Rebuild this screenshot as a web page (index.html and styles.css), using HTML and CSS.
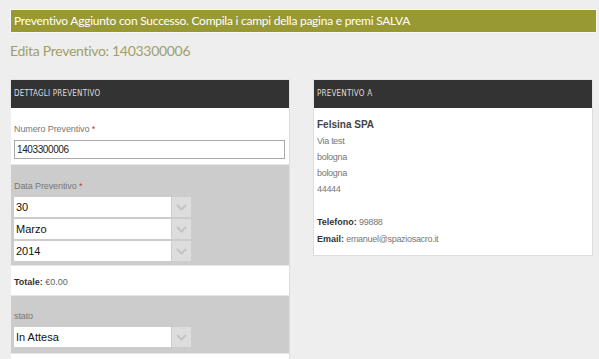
FILE: index.html
```html
<!DOCTYPE html>
<html lang="it">
<head>
  <meta charset="UTF-8" />
  <meta name="viewport" content="width=device-width, initial-scale=1.0"/>
  <title>Edita Preventivo</title>
  <link rel="stylesheet" href="styles.css">
</head>
<body>

  <div class="notice">Preventivo Aggiunto con Successo. Compila i campi della pagina e premi SALVA</div>
  <h1>Edita Preventivo: 1403300006</h1>

  <div class="columns">
    <div class="panel left">
      <div class="panel-head">Dettagli Preventivo</div>

      <div class="row white numero">
        <label>Numero Preventivo <span class="req">*</span></label>
        <input type="text" class="field" value="1403300006">
      </div>

      <div class="row grey data">
        <label>Data Preventivo <span class="req">*</span></label>
        <div class="select"><span>30</span><i class="arrow"><svg width="11" height="7" viewBox="0 0 11 7"><path d="M1 1l4.5 4.5L10 1" fill="none" stroke="#c4c4c4" stroke-width="2"/></svg></i></div>
        <div class="select"><span>Marzo</span><i class="arrow"><svg width="11" height="7" viewBox="0 0 11 7"><path d="M1 1l4.5 4.5L10 1" fill="none" stroke="#c4c4c4" stroke-width="2"/></svg></i></div>
        <div class="select"><span>2014</span><i class="arrow"><svg width="11" height="7" viewBox="0 0 11 7"><path d="M1 1l4.5 4.5L10 1" fill="none" stroke="#c4c4c4" stroke-width="2"/></svg></i></div>
      </div>

      <div class="row white total">
        <b>Totale:</b> €0.00
      </div>

      <div class="row grey stato">
        <label>stato</label>
        <div class="select"><span>In Attesa</span><i class="arrow"><svg width="11" height="7" viewBox="0 0 11 7"><path d="M1 1l4.5 4.5L10 1" fill="none" stroke="#c4c4c4" stroke-width="2"/></svg></i></div>
      </div>

      <div class="row white rest"></div>
    </div>

    <div class="panel right">
      <div class="panel-head">Preventivo a</div>
      <div class="card">
        <div class="name">Felsina SPA</div>
        <div class="line">Via test</div>
        <div class="line">bologna</div>
        <div class="line">bologna</div>
        <div class="line">44444</div>
        <div class="line"></div>
        <div class="line contact"><b>Telefono:</b> 99888</div>
        <div class="line contact"><b>Email:</b> emanuel@spaziosacro.it</div>
      </div>
    </div>
  </div>

</body>
</html>
```

FILE: styles.css
```css
body {
  margin: 0;
  padding: 9px 2px 0 10px;
  background: #eeeeee;
  font-family: "Liberation Sans", Arial, sans-serif;
  color: #333;
}
.notice {
  background: #999933;
  border: 1px solid #f7f7f7;
  color: #fff;
  font-family: Lato, sans-serif;
  font-size: 12px;
  letter-spacing: -0.25px;
  height: 22px;
  line-height: 22px;
  padding-left: 3px;
}
h1 {
  font-family: Lato, sans-serif;
  font-weight: normal;
  font-size: 14px;
  letter-spacing: -0.3px;
  color: #a0a066;
  margin: 8px 0 0 0;
  line-height: 20px;
}
.columns {
  display: flex;
  gap: 23px;
  margin-top: 18px;
}
.panel {
  width: 280px;
}
.panel-head {
  background: #333;
  color: #ddd;
  height: 28px;
  line-height: 28px;
  padding-left: 3px;
  font-family: "DejaVu Sans", sans-serif;
  font-stretch: condensed;
  font-size: 8px;
  text-transform: uppercase;
  letter-spacing: 0.2px;
  border: 1px solid #e4e4e4;
  border-bottom: none;
}
.row {
  padding: 0 3px;
  border-right: 1px solid #ddd;
  border-left: 1px solid #eee;
  border-bottom: 1px solid #e6e6e6;
  box-sizing: border-box;
}
.white { background: #fff; }
.grey { background: #cccccc; }
label {
  display: block;
  font-size: 9px;
  letter-spacing: -0.1px;
  color: #777;
  line-height: 14px;
}
.req { color: #c33; }
.numero { height: 57px; padding-top: 14px; }
.numero label { margin-bottom: 4px; }
.field {
  display: block;
  box-sizing: border-box;
  width: 271px;
  height: 19px;
  border: 1px solid #aaa;
  padding: 0 2px;
  font-family: "Liberation Sans", Arial, sans-serif;
  font-size: 10px;
  letter-spacing: -0.4px;
  color: #222;
  margin: 0;
}
.data { height: 101px; padding-top: 14px; }
.data label { margin-bottom: 4px; }
.select {
  display: flex;
  width: 177px;
  height: 20px;
  margin-bottom: 2px;
}
.select span {
  flex: 1;
  background: #fff;
  font-size: 11px;
  line-height: 20px;
  padding-left: 2px;
  color: #111;
}
.arrow {
  width: 19px;
  margin-left: 1px;
  background: #dddddd;
  display: flex;
  align-items: center;
  justify-content: center;
}
.total {
  height: 30px;
  line-height: 30px;
  font-size: 9px;
  color: #666;
  padding-top: 1px;
}
.total b { color: #333; }
.stato { padding-top: 13px; height: 58px; }
.stato label { margin-bottom: 4px; }
.rest { height: 10px; }
.card {
  background: #fff;
  border: 1px solid #ddd;
  border-top: none;
  padding: 9px 6px 8px 3px;
  font-size: 9px;
  letter-spacing: -0.3px;
  color: #777;
}
.name {
  font-size: 10px;
  font-weight: bold;
  letter-spacing: 0;
  color: #444;
  line-height: 16px;
}
.line {
  line-height: 16px;
  height: 16px;
}
.contact { height: 17px; line-height: 19px; }
.contact b { color: #333; letter-spacing: 0; }
```
